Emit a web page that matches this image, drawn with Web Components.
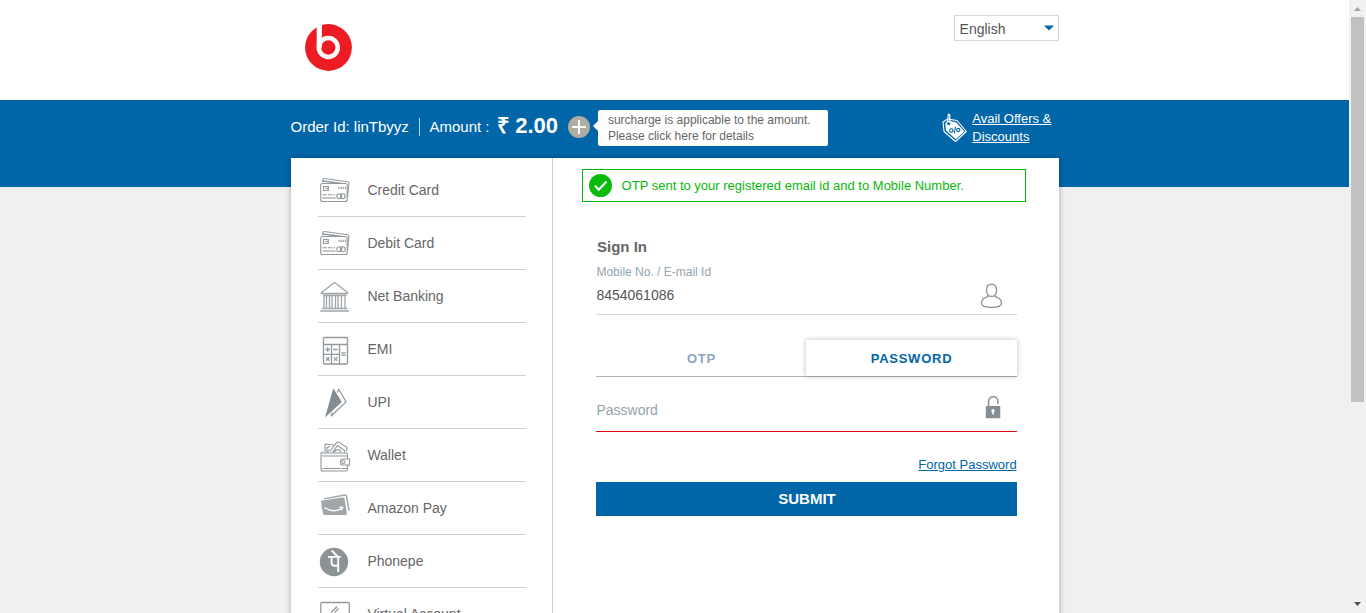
<!DOCTYPE html>
<html lang="en">
<head>
<meta charset="utf-8">
<title>Payment</title>
<style>
html,body{margin:0;height:613px;overflow:hidden;background:#f0f0f0;font-family:"Liberation Sans",Arial,sans-serif;color:#666}
</style>
</head>
<body>
<checkout-page></checkout-page>
<script>
const define = (name, css, html) => customElements.define(name, class extends HTMLElement {
  constructor() {
    super();
    const t = document.createElement('template');
    t.innerHTML = `<style>*{box-sizing:border-box}svg{display:block}${css}</style>${typeof html === 'function' ? html(this) : html}`;
    this.attachShadow({mode: 'open'}).append(t.content.cloneNode(true));
  }
});

const card = `<g fill="none" stroke="#92989c" stroke-width="1.1"><path d="M2.500 5 3 1.800Q3.300.8 4.500 1L27.500 4.300Q29.100 4.600 28.900 6L27.500 20"/><path d="M3 3.500 22 6" stroke-width="1.600"/><rect x=".7" y="6" width="26.500" height="18" rx="2" fill="#fff"/><rect x="3.500" y="9" width="4.800" height="4"/><path d="M5.500 11H8M2.500 17.200H15" stroke-dasharray="4.500 1"/><path d="M2.500 20.500H15.500"/><path d="M18.500 10.300H26" stroke-width="2.200" stroke-dasharray="1.100 1"/><circle cx="19.300" cy="18.700" r="2.500"/><circle cx="22.700" cy="18.700" r="2.500"/></g>`;
const icons = {
  card,
  bank: `<g fill="none" stroke="#a0a6aa" stroke-width="1.400"><path d="M1.500 12.500V11.500L14.500 1.500 27.500 11.500V12.500Z" stroke-linejoin="round"/><path d="M3 14.300H26.500M2 27.500H27.500M.3 30H29" stroke-width="1.700"/><path d="M4 15V27M6.500 15V27M9.500 15V27M12 15V27M15.500 15V27M18 15V27M21.500 15V27M25 15V27" stroke-width="1.300"/></g>`,
  emi: `<g fill="none" stroke="#92989c" stroke-width="1.300"><rect x="3.500" y="3.500" width="24" height="26.500" rx="1"/><path d="M3.500 10.500H27.500M11.500 10.500V30M19.500 10.500V30M3.500 20.300H19.500M5.500 15.500H10M7.700 13.300V17.700M13.300 15.500H17.700M21.300 18.800H25.800M21.300 21.200H25.800M6 23.300 9.500 26.800M9.500 23.300 6 26.800M14 26.800 17.500 23.300M14 23.300 15 24.300M16.500 25.800 17.500 26.800"/></g>`,
  upi: `<path d="M13.300 1.200 21.900 15 5 30.500Z" fill="#868d92"/><path d="M17.200 5.500 18.800 2.200 26 15 11 29.300 12.300 25.500" fill="none" stroke="#92989c" stroke-width="1.200"/>`,
  wallet: `<g fill="none" stroke="#92989c" stroke-width="1.100"><path d="M5 12V4.500Q5 3.500 6 3.500L13.500 4.500M7 12V7L10 6M10 11 16.500 2 18.500 1.500 27 7 26.500 11M12.500 12 17.500 5 24.500 10V12M14 12Q15.500 9 18 9T21 12M9.500 9Q8 9.500 8 12"/><path d="M2.500 12.500H26Q27.500 12.500 27.500 14V18.500M27.500 24.500V29Q27.500 30.500 26 30.500H3Q1 30.500 1 28.500V13.500Q1 11.500 3 11.500"/><path d="M2 15.400H27" stroke="#c3c7c9" stroke-width="2"/><path d="M2.500 28H27.500" stroke-dasharray="18 1"/><path d="M29.500 18.500H22.500Q20.500 18.500 20.500 21.500T22.500 24.500H29.500Z"/><circle cx="23.500" cy="21.500" r="1.500"/></g>`,
  amazon: `<path d="M3.800 5.200 24.500 1.200Q26.800.9 27.300 3L29.700 17.500 28.300 18 26 4Q25.600 2.700 24 2.900L3.800 6.400Z" fill="#a1a6a8"/><path d="M1 9.200Q.8 7.700 2 7.500L22.500 4.400Q24.300 4.200 24.600 6L26.800 20Q27 22 25.300 22H5Q3.300 22 3 20.500Z" fill="#a1a6a8"/><path d="M4.500 14.500Q13 20.500 22 15.500M19 14.200 22.600 14.300 21.500 17.200" fill="none" stroke="#fff" stroke-width="1.300"/>`,
  phonepe: `<circle cx="14" cy="16" r="14.200" fill="#8c9396"/><g fill="none" stroke="#fff" stroke-width="1.900"><path d="M8 10.900H20.800M11.600 11V17Q11.600 19.700 14.500 19.700H18M18.200 11V26M17.500 10.500 11.700 4.500"/></g>`,
  virtual: `<g fill="none" stroke="#92989c" stroke-width="1.300"><path d="M.8 31V4Q.8 3 1.800 3H28Q29.300 3 29.300 4V31M11 13 17 7M14.500 13 18.500 9"/></g>`
};

define('brand-logo', ':host{display:block;width:48px;height:48px}', `<svg width="48" height="48" viewBox="0 0 48 48"><circle cx="23.500" cy="23.500" r="23.400" fill="#ed1c24"/><path d="M11.700 0V23.500H16.900V0Z" fill="#fff"/><circle cx="23.300" cy="23.500" r="9.450" fill="none" stroke="#fff" stroke-width="4.500"/></svg>`);

define('language-select', ':host{display:flex;justify-content:space-between;width:105px;height:26px;border:1px solid #d0dade;background:#fff;padding:5px 4px 0 4.600px;font-size:14px;line-height:17px;color:#555}svg{margin-top:4px}', `<slot></slot><svg width="10" height="6"><path d="M0 .5H10L5 5.500Z" fill="#0066a8"/></svg>`);

define('order-bar', `:host{display:flex;height:58px;color:#fff;font-size:15px;line-height:18px;padding-top:10px;margin-left:-.5px}
.id{padding-top:8px;width:128.500px}.sep{width:1px;height:18px;margin-top:8px;background:#c0d5e5}.am{padding:8px 0 0 9.500px;width:77px}.v{font-size:22px;font-weight:bold;line-height:26px;padding-top:3px;width:61px;display:flex;justify-content:space-between}.plus{margin:6px 0 0 9.500px;width:23px}
.tip{position:relative;width:230px;height:36px;background:#fff;border-radius:2px;margin-left:7px;padding:2px 10px 2px 10.400px;font-size:12px;line-height:16px;color:#666}.tip:before{content:"";position:absolute;left:-5px;top:11px;border:5px solid transparent;border-left:0;border-right-color:#fff}
.offer{display:flex;margin-left:auto;width:117px}.offer a{font-size:13px;line-height:18px;text-decoration:underline;padding:0 0 0 5.300px;white-space:nowrap}.tag{margin-top:3px}`,
`<div class="id">Order Id: linTbyyz</div><i class="sep"></i><div class="am">Amount :</div><div class="v"><span>₹</span><span>2.00</span></div><svg class="plus" width="23" height="23"><circle cx="11" cy="11" r="11" fill="#aeaca3"/><path d="M4 11H18M11 4V18" stroke="#fff" stroke-width="2"/></svg>
<div class="tip">surcharge is applicable to the amount.<br>Please click here for details</div>
<div class="offer"><svg class="tag" width="25" height="30" viewBox="0 0 25 30"><path d="M1 9 5.500 6 15 7.500 24.300 18.500 13.500 28.500 2 18.500Z" fill="#0066a8" stroke="#fff" stroke-width="1.100" stroke-linejoin="round"/><path d="M3.200 10 6.500 7.800 14 9.300 22.500 18.500 13.700 26.300 4 17.500Z" fill="#fff"/><circle cx="6.800" cy="10.500" r="1.600" fill="#0066a8"/><path d="M7.800 10V3Q7.800.5 6.300 1.500L5.500 9" fill="none" stroke="#fff" stroke-width="1.200"/><g fill="none" stroke="#0066a8" stroke-width="1.100"><circle cx="9.300" cy="17.500" r="1.700"/><path d="M12.200 20.500 13.700 13.500"/><circle cx="16.300" cy="17" r="1.600"/></g></svg><a>Avail Offers &amp;<br>Discounts</a></div>`);

define('pay-option', ':host{display:flex;align-items:center;height:53px;border-bottom:1px solid #c8d0d4;font-size:14px;line-height:16px;color:#666}svg{width:32px;height:32px;margin:2px 15.400px 0 2px;overflow:visible}slot{display:block}', el => `<svg viewBox="0 0 32 32"><g transform="translate(0 ${el.getAttribute('dy') || 0})">${icons[el.getAttribute('icon')]}</g></svg><span><slot></slot></span>`);

define('otp-notice', ':host{display:flex;align-items:center;width:444px;height:33px;border:1px solid #09b80d;font-size:13px;color:#09b80d;padding-left:6px;gap:8.600px;white-space:nowrap}', `<svg width="24" height="24"><circle cx="11.500" cy="11.500" r="11.500" fill="#0abb0e"/><path d="M6 11.800 9.800 15.700 17.500 7.500" fill="none" stroke="#fff" stroke-width="2"/></svg><span><slot></slot></span>`);

define('sign-in-form', `:host{display:block;width:421px;margin:36px 0 0 14px}
h2{font-size:15px;line-height:18px;margin:0 0 0 1px;color:#666}label{display:block;font-size:12px;line-height:14px;margin:9px 0 0 .4px;color:#94a4b0}
.field{display:flex;justify-content:space-between;font-size:14px;line-height:16px;padding-left:.4px}.user{height:36px;border-bottom:1px solid #d0dade;padding-top:8px;color:#555}
.tabs{display:flex;height:38px;margin-top:24px;border-bottom:1px solid #b0b3b5;padding-top:1px;font-size:13px;font-weight:bold;letter-spacing:.75px;line-height:37px;text-align:center;color:#8ea4bf}.tabs span{width:210px;height:36px;padding-left:1px}.tabs .on{width:211px;color:#0066a8;background:#fff;box-shadow:0 0 5px rgba(0,0,0,.28);padding:0}
.pw{height:55px;border-bottom:1px solid #e00b10;padding-top:25px;color:#94a4ac}.forgot{display:block;text-align:right;font-size:13px;line-height:16px;margin:25px .4px 0 0;color:#0066a8;text-decoration:underline}
button{display:block;width:100%;height:34px;margin-top:9px;padding:0 0 0 1px;border:0;background:#0066a8;color:#fff;font:bold 15px/34px "Liberation Sans",Arial,sans-serif}`,
`<h2>Sign In</h2><label>Mobile No. / E-mail Id</label>
<div class="field user"><span>8454061086</span><svg style="margin:-4px 14px 0 0" width="23" height="26" fill="none" stroke="#92989c" stroke-width="1.400"><path d="M11.500 1.300C7.500 1.300 6.500 4 6.500 7C6.500 11 8.500 13.500 11.500 13.500S16.500 11 16.500 7C16.500 4 15.500 1.300 11.500 1.300ZM8.500 12.800C6 15.500 1.500 14.500 1.500 20C1.500 23 3.500 24.500 11.500 24.500S21.500 23 21.500 20C21.500 14.500 17 15.500 14.500 12.800"/></svg></div>
<div class="tabs"><span>OTP</span><span class="on">PASSWORD</span></div>
<div class="field pw"><span>Password</span><svg style="margin:-7px 16px 0 0" width="16" height="24"><path d="M3.500 11V6.500C3.500.3 12.900.3 12.900 6.500V9" fill="none" stroke="#868e93" stroke-width="1.500"/><rect x=".8" y="11" width="14.500" height="12.200" rx="1" fill="#868e93"/><circle cx="8" cy="15.700" r="1.700" fill="#fff"/><path d="M8 16V19.500" stroke="#fff" stroke-width="1.600"/></svg></div>
<a class="forgot">Forgot Password</a><button>SUBMIT</button>`);

define('scroll-rail', ':host{display:flex;flex-direction:column;align-items:center;width:17px;height:613px;background:#f1f1f1}.thumb{width:13px;height:385px;background:#c1c1c1}.dn{margin-top:auto}', `<svg width="17" height="17"><path d="M5 11H12L8.500 7Z" fill="#a3a3a3"/></svg><div class="thumb"></div><svg class="dn" width="17" height="17"><path d="M5 6H12L8.500 10Z" fill="#505050"/></svg>`);

define('checkout-page', `:host{display:flex;width:1366px;height:613px;overflow:hidden}
main{width:1349px;height:613px;overflow:hidden;background:linear-gradient(#fff 100px,#0066a8 100px 187px,#f0f0f0 187px)}
.wrap{width:768px;margin-left:291px}header{height:100px;display:flex;justify-content:space-between;align-items:flex-start}brand-logo{margin:24px 0 0 14px}language-select{margin-top:15px}
.panel{display:flex;height:600px;background:#fff;box-shadow:0 0 6px rgba(0,0,0,.3)}nav{width:262px;border-right:1px solid #c8d0d4;padding:6px 26px 0 27px}section{padding:11px 0 0 29px}`,
`<main><div class="wrap"><header><brand-logo></brand-logo><language-select>English</language-select></header><order-bar></order-bar>
<div class="panel"><nav><pay-option icon="card" dy="2.5">Credit Card</pay-option><pay-option icon="card" dy="2.5">Debit Card</pay-option><pay-option icon="bank">Net Banking</pay-option><pay-option icon="emi">EMI</pay-option><pay-option icon="upi">UPI</pay-option><pay-option icon="wallet" dy="0.5">Wallet</pay-option><pay-option icon="amazon" dy="0">Amazon Pay</pay-option><pay-option icon="phonepe">Phonepe</pay-option><pay-option icon="virtual" dy="0.5">Virtual Account</pay-option></nav>
<section><otp-notice>OTP sent to your registered email id and to Mobile Number.</otp-notice><sign-in-form></sign-in-form></section></div></div></main><scroll-rail></scroll-rail>`);
</script>
</body>
</html>
